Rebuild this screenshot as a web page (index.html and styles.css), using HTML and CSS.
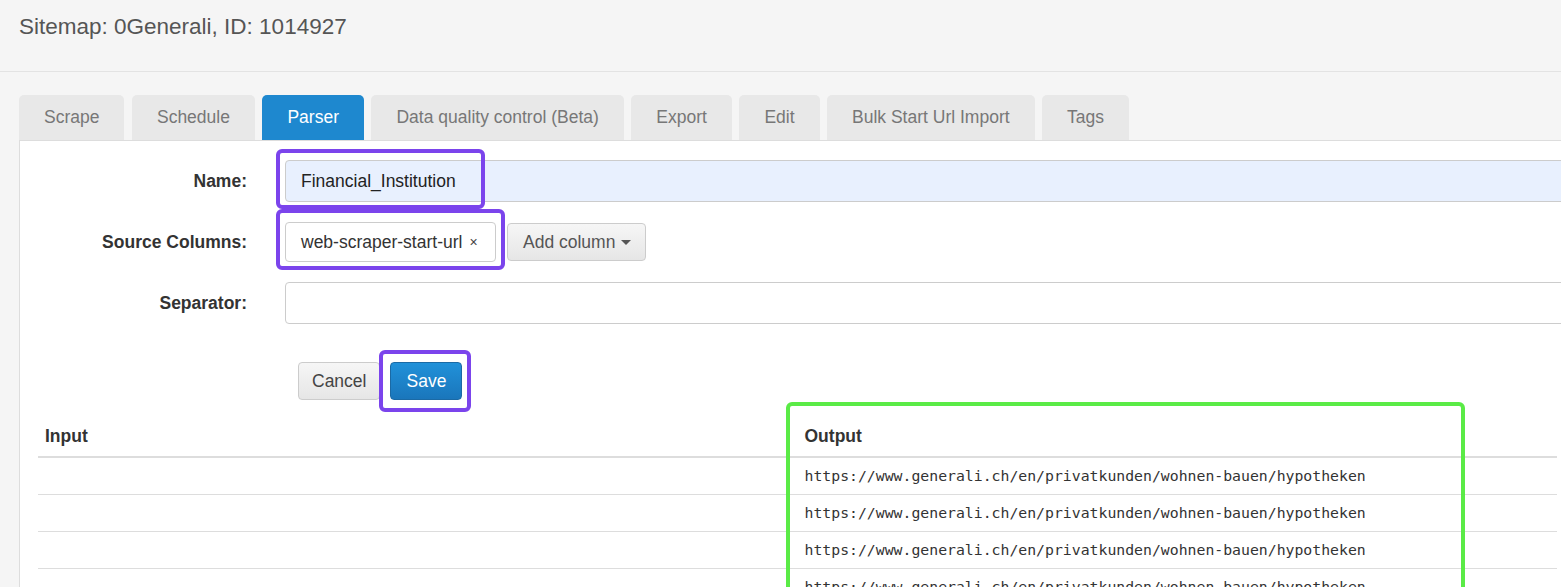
FILE: index.html
```html
<!DOCTYPE html>
<html>
<head>
<meta charset="utf-8">
<title>Sitemap Parser</title>
<link rel="stylesheet" href="styles.css">
</head>
<body>
<div class="page">
  <header class="page-header">
    <h4 class="title">Sitemap: 0Generali, ID: 1014927</h4>
  </header>

  <nav class="tabs">
    <a class="tab">Scrape</a>
    <a class="tab">Schedule</a>
    <a class="tab active">Parser</a>
    <a class="tab">Data quality control (Beta)</a>
    <a class="tab">Export</a>
    <a class="tab">Edit</a>
    <a class="tab">Bulk Start Url Import</a>
    <a class="tab">Tags</a>
  </nav>

  <section class="panel">
    <form class="form">
      <div class="form-row">
        <label class="label">Name:</label>
        <div class="control">
          <div class="input autofill">Financial_Institution</div>
        </div>
      </div>
      <div class="form-row">
        <label class="label">Source Columns:</label>
        <div class="control inline">
          <div class="tagbox"><span>web-scraper-start-url</span><span class="tag-x">×</span></div>
          <button type="button" class="btn btn-default add-col">Add column <span class="caret"></span></button>
        </div>
      </div>
      <div class="form-row">
        <label class="label">Separator:</label>
        <div class="control">
          <div class="input"></div>
        </div>
      </div>
      <div class="actions">
        <button type="button" class="btn btn-default btn-cancel">Cancel</button>
        <button type="button" class="btn btn-primary">Save</button>
      </div>
    </form>

    <table class="table">
      <thead>
        <tr><th>Input</th><th>Output</th></tr>
      </thead>
      <tbody>
        <tr><td></td><td class="mono">https://www.generali.ch/en/privatkunden/wohnen-bauen/hypotheken</td></tr>
        <tr><td></td><td class="mono">https://www.generali.ch/en/privatkunden/wohnen-bauen/hypotheken</td></tr>
        <tr><td></td><td class="mono">https://www.generali.ch/en/privatkunden/wohnen-bauen/hypotheken</td></tr>
        <tr><td></td><td class="mono">https://www.generali.ch/en/privatkunden/wohnen-bauen/hypotheken</td></tr>
        <tr><td></td><td class="mono">https://www.generali.ch/en/privatkunden/wohnen-bauen/hypotheken</td></tr>
      </tbody>
    </table>
  </section>

  <div class="mark mark-name"></div>
  <div class="mark mark-source"></div>
  <div class="mark mark-save"></div>
  <div class="mark-green"></div>
</div>
</body>
</html>
```

FILE: styles.css
```css
* { box-sizing: border-box; }

html, body {
  margin: 0;
  padding: 0;
  height: 100%;
  overflow: hidden;
}

body {
  background: #f5f5f5;
  font-family: "Liberation Sans", Arial, sans-serif;
  font-size: 17.5px;
  color: #333;
}

.page {
  position: relative;
  min-height: 100%;
}

.page-header {
  height: 72px;
  padding: 15px 19px 0;
  border-bottom: 1px solid #e3e3e3;
}

.title {
  margin: 0;
  font-size: 22.5px;
  font-weight: normal;
  line-height: 1.1;
  color: #555;
}

.tabs {
  display: flex;
  gap: 7.5px;
  margin-top: 23px;
  padding-left: 19px;
}

.tab {
  display: block;
  padding: 10px 25px;
  line-height: 25px;
  font-size: 17.5px;
  color: #777;
  background: #e8e8e8;
  border-radius: 5px 5px 0 0;
  white-space: nowrap;
}

.tab.active {
  background: #1e88cf;
  color: #fff;
}

.panel {
  margin-left: 19px;
  background: #fff;
  border-left: 1px solid #ddd;
  border-top: 1px solid #ddd;
  padding-top: 19px;
  min-height: 600px;
  overflow: hidden;
}

.form-row {
  display: grid;
  grid-template-columns: 227px 1fr;
  column-gap: 38px;
  align-items: center;
  margin-bottom: 20px;
}

.label {
  text-align: right;
  font-weight: bold;
  color: #333;
}

.control {
  margin-right: -20px;
}

.control.inline {
  display: flex;
  align-items: center;
}

.input {
  height: 42px;
  padding: 0 15px;
  line-height: 40px;
  border: 1px solid #ccc;
  border-radius: 4px;
  background: #fff;
  color: #222;
}

.input.autofill {
  background: #e8f0fe;
}

.tagbox {
  display: flex;
  align-items: center;
  height: 40px;
  width: 211px;
  padding: 0 15px;
  border: 1px solid #ccc;
  border-radius: 4px;
  background: #fff;
  color: #333;
  white-space: nowrap;
}

.tag-x {
  margin-left: 7px;
  font-size: 14px;
  color: #444;
}

.btn {
  display: inline-flex;
  align-items: center;
  height: 38px;
  padding: 0 15px;
  font-family: inherit;
  font-size: 17.5px;
  border: 1px solid #ccc;
  border-radius: 4px;
  cursor: pointer;
}

.btn-default {
  color: #555;
  background: linear-gradient(#f6f6f6, #e6e6e6);
}

.btn-primary {
  color: #fff;
  border-color: #1b6aa5;
  background: linear-gradient(#2191d9, #1a76bb);
}

.add-col {
  margin-left: 11px;
  padding: 0 14px 0 15px;
}

.caret {
  display: inline-block;
  width: 0;
  height: 0;
  margin-left: 6px;
  border-top: 5px solid #555;
  border-left: 5px solid transparent;
  border-right: 5px solid transparent;
}

.actions {
  display: flex;
  gap: 10px;
  margin: 38px 0 0 278px;
}

.btn-cancel {
  color: #444;
  padding: 0 13px;
}

.table {
  width: calc(100% - 22px);
  margin: 10px 0 0 18px;
  border-collapse: collapse;
  table-layout: fixed;
}

.table th {
  text-align: left;
  font-weight: bold;
  color: #333;
  padding: 14px 7px 7px;
  line-height: 25px;
  border-bottom: 2px solid #ddd;
}

.table td {
  padding: 9px 7px 10px;
  line-height: 17px;
  height: 37px;
}

.table tbody tr + tr td {
  border-top: 1px solid #ddd;
}

.mono {
  font-family: "DejaVu Sans Mono", "Liberation Mono", monospace;
  font-size: 14.8px;
  color: #333;
  white-space: nowrap;
}

.mark {
  position: absolute;
  border: 4px solid #7b44ec;
  border-radius: 6px;
  pointer-events: none;
}

.mark-name {
  left: 276px;
  top: 149px;
  width: 209px;
  height: 60px;
}

.mark-source {
  left: 276px;
  top: 209px;
  width: 229px;
  height: 61px;
}

.mark-save {
  left: 379px;
  top: 350px;
  width: 92px;
  height: 62px;
}

.mark-green {
  position: absolute;
  left: 786px;
  top: 402px;
  width: 679px;
  height: 260px;
  border: 4px solid #5aeb46;
  border-radius: 6px;
  pointer-events: none;
}
```
